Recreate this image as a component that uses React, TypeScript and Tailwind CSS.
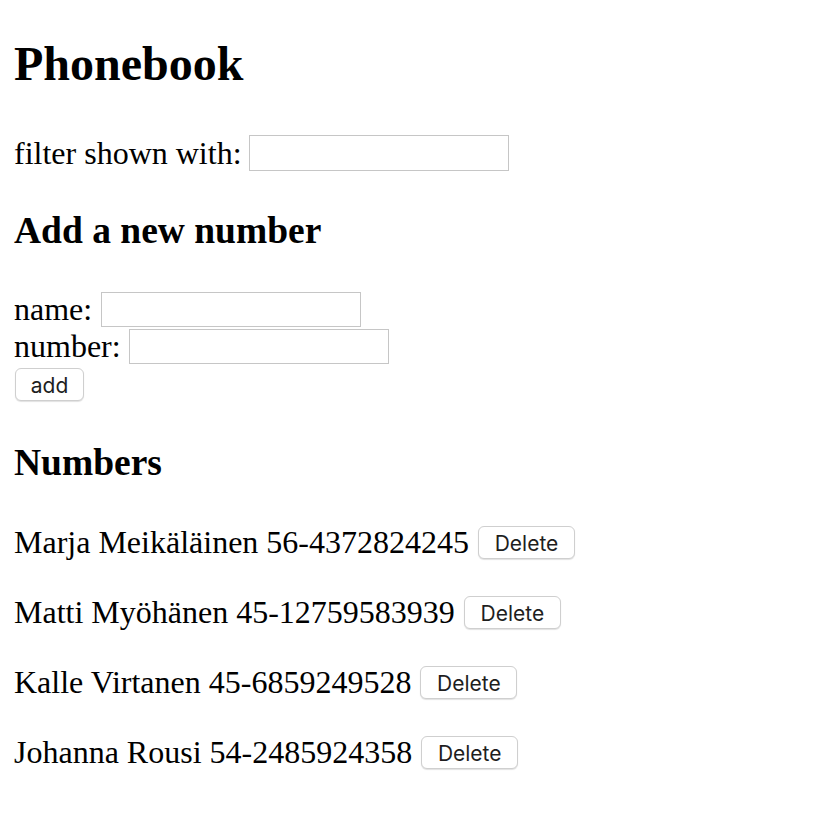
import React from "react";

const serif = "font-['Liberation_Serif','Times_New_Roman',serif]";
const sans = "font-['Inter','Liberation_Sans',sans-serif]";

const people = [
  { name: "Marja Meikäläinen", number: "56-4372824245" },
  { name: "Matti Myöhänen", number: "45-12759583939" },
  { name: "Kalle Virtanen", number: "45-6859249528" },
  { name: "Johanna Rousi", number: "54-2485924358" },
];

function Btn({ children, w }: { children: React.ReactNode; w: string }) {
  return (
    <button
      className={`${sans} ${w} h-[33px] shrink-0 rounded-[6px] border border-[#cfcfcf] bg-white pt-[2px] text-[21px] leading-none text-[#1e1e1e] shadow-[0_1px_1px_rgba(0,0,0,0.12)]`}
    >
      {children}
    </button>
  );
}

function Field() {
  return (
    <input className="h-[35px] w-[260px] shrink-0 border border-[#c6c6c6] bg-white outline-none" />
  );
}

export default function App() {
  return (
    <div className={`${serif} min-h-[822px] w-full bg-white pl-[14px] text-black`}>
      <h1 className="pt-[40px] text-[48px] font-bold leading-[47px]">Phonebook</h1>
      <div className="mt-[48px] flex h-[36px] items-center gap-[7px] text-[32px] leading-[36px]">
        <span>filter shown with:</span>
        <input className="h-[36px] w-[260px] shrink-0 border border-[#c6c6c6] bg-white outline-none" />
      </div>
      <h2 className="mt-[41px] text-[37.5px] font-bold leading-[37px]">Add a new number</h2>
      <div className="mt-[43px] flex h-[35px] items-center gap-[9px] text-[32px] leading-[35px]">
        <span>name:</span>
        <Field />
      </div>
      <div className="mt-[2px] flex h-[35px] items-center gap-[8px] text-[32px] leading-[35px]">
        <span>number:</span>
        <Field />
      </div>
      <div className="mt-[4px] flex pl-[1px]">
        <Btn w="w-[69px]">add</Btn>
      </div>
      <h2 className="mt-[43px] text-[37.5px] font-bold leading-[37px]">Numbers</h2>
      <div className="mt-[45px] flex flex-col gap-[37px]">
        {people.map((p) => (
          <div key={p.name} className="flex h-[33px] items-center gap-[9px] text-[32px] leading-[33px]">
            <span>
              {p.name} {p.number}
            </span>
            <Btn w="w-[97px]">Delete</Btn>
          </div>
        ))}
      </div>
    </div>
  );
}
